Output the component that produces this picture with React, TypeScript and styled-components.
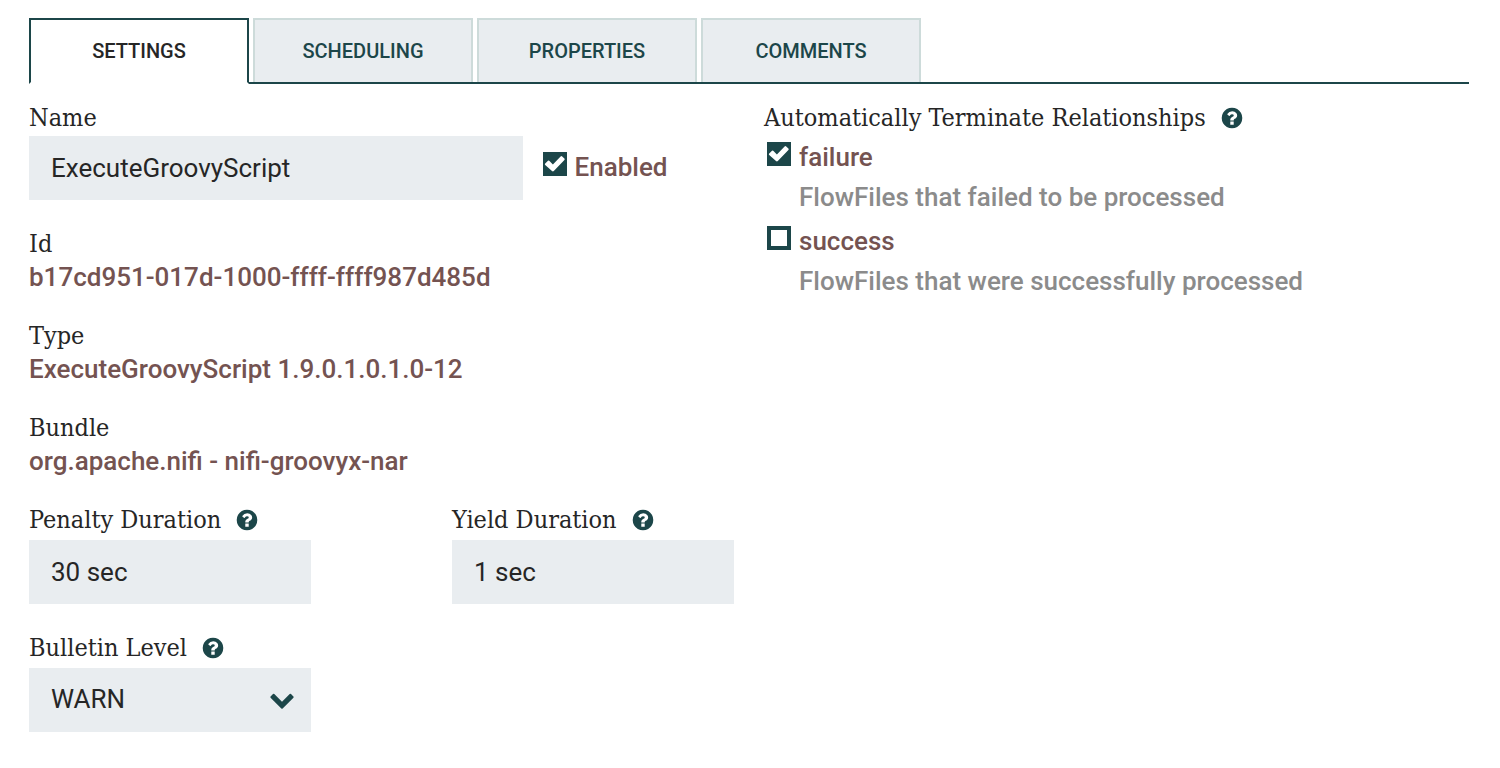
import React, { useId, useState } from 'react';
import styled, { createGlobalStyle, ThemeProvider } from 'styled-components';

const theme = {
  teal: '#1c4649',
  field: '#e9edf0',
  tabBorder: '#cddbda',
  ink: '#262626',
  value: '#745351',
  muted: '#8b8b8b',
  sans: "Roboto, 'Liberation Sans', sans-serif",
  slab: "'Roboto Slab', 'DejaVu Serif Condensed', 'DejaVu Serif', serif",
};

const GlobalStyle = createGlobalStyle`
  * { box-sizing: border-box; }
  body {
    margin: 0;
    background: #fff;
    color: ${theme.ink};
    font-family: ${theme.sans};
    font-size: 26px;
    line-height: 32px;
  }
  button, input, select { font: inherit; color: inherit; }
`;

const Page = styled.main`
  padding: 18px 31px 36px 29px;
`;

const TabList = styled.div`
  display: flex;
  gap: 4px;
  border-bottom: 2px solid ${(p) => p.theme.teal};
`;

const Tab = styled.button<{ $active: boolean }>`
  width: 220px;
  height: ${(p) => (p.$active ? 66 : 64)}px;
  margin: 0 0 ${(p) => (p.$active ? -2 : 0)}px;
  padding: 0;
  border: 2px solid ${(p) => (p.$active ? p.theme.teal : p.theme.tabBorder)};
  border-bottom: ${(p) => (p.$active ? '2px solid #fff' : '0')};
  background: ${(p) => (p.$active ? '#fff' : p.theme.field)};
  color: ${(p) => (p.$active ? p.theme.ink : p.theme.teal)};
  font-size: 20px;
  font-weight: 500;
  text-transform: uppercase;
  cursor: pointer;
`;

const Columns = styled.div`
  display: grid;
  grid-template-columns: 1fr 1fr;
  gap: 30px;
  padding-top: 18px;
`;

const Column = styled.section`
  display: flex;
  flex-direction: column;
  gap: 28px;
`;

const Field = styled.div<{ $gap?: number; $width?: string }>`
  display: flex;
  flex-direction: column;
  gap: ${(p) => p.$gap ?? 2}px;
  width: ${(p) => p.$width ?? 'auto'};
`;

const LabelRow = styled.div`
  display: flex;
  align-items: center;
  gap: 14px;
  font-family: ${(p) => p.theme.slab};
  font-size: 25px;
  white-space: nowrap;
`;

const Value = styled.div`
  color: ${(p) => p.theme.value};
  font-weight: 500;
  line-height: 30px;
`;

const NameRow = styled.div`
  display: flex;
  gap: 20px;
`;

const TextBox = styled.input<{ $width?: string }>`
  width: ${(p) => p.$width ?? '100%'};
  height: 64px;
  padding: 0 22px;
  border: 0;
  border-radius: 0;
  background: ${(p) => p.theme.field};
`;

const DurationRow = styled.div`
  display: flex;
  justify-content: space-between;
`;

const SelectWrap = styled.div`
  display: grid;
  align-items: center;
`;

const Select = styled.select`
  grid-area: 1 / 1;
  appearance: none;
  width: 100%;
  height: 64px;
  padding: 0 22px 2px;
  border: 0;
  border-radius: 0;
  background: ${(p) => p.theme.field};
`;

const Chevron = styled.svg`
  grid-area: 1 / 1;
  justify-self: end;
  width: 26px;
  height: 26px;
  margin: 0 16px 2px 0;
  fill: ${(p) => p.theme.teal};
  pointer-events: none;
`;

const HelpSvg = styled.svg`
  width: 24px;
  height: 24px;
  fill: ${(p) => p.theme.teal};
`;

const CheckLabel = styled.label`
  display: flex;
  align-items: flex-start;
  gap: 8px;
  color: ${(p) => p.theme.value};
  font-weight: 500;
`;

const CheckBoxWrap = styled.span`
  display: grid;
  margin-top: 1px;
`;

const CheckInput = styled.input`
  grid-area: 1 / 1;
  appearance: none;
  width: 24px;
  height: 24px;
  margin: 0;
  border: 4px solid ${(p) => p.theme.teal};
  background: #fff;

  &:checked { background: ${(p) => p.theme.teal}; }
`;

const CheckMark = styled.svg`
  grid-area: 1 / 1;
  width: 24px;
  height: 24px;
  fill: #fff;
  pointer-events: none;
`;

const EnabledSlot = styled.div`
  padding-top: 15px;
`;

const Relationships = styled.ul`
  display: flex;
  flex-direction: column;
  gap: 12px;
  margin: 0;
  padding: 7px 0 0 3px;
  list-style: none;
`;

const Description = styled.p`
  margin: 8px 0 0;
  padding-left: 32px;
  color: ${(p) => p.theme.muted};
  font-weight: 500;
`;

function HelpIcon() {
  return (
    <HelpSvg viewBox="0 0 1792 1792" role="img" aria-label="Help">
      <path d="M1024 1376v-192q0-14-9-23t-23-9h-192q-14 0-23 9t-9 23v192q0 14 9 23t23 9h192q14 0 23-9t9-23zm256-672q0-88-55.5-163t-138.5-116-170-41q-243 0-371 213-15 24 8 42l132 100q7 6 19 6 16 0 25-12 53-68 86-92 34-24 86-24 48 0 85.5 26t37.5 59q0 38-20 61t-68 45q-63 28-115.5 86.5t-52.5 125.5v36q0 14 9 23t23 9h192q14 0 23-9t9-23q0-19 21.5-49.5t54.5-49.5q32-18 49-28.5t46-35 44.5-48 28-60.5 12.5-81zm384 192q0 209-103 385.5t-279.5 279.5-385.5 103-385.5-103-279.5-279.5-103-385.5 103-385.5 279.5-279.5 385.5-103 385.5 103 279.5 279.5 103 385.5z" />
    </HelpSvg>
  );
}

function CheckBox({ label, initial }: { label: string; initial: boolean }) {
  const [checked, setChecked] = useState(initial);
  return (
    <CheckLabel>
      <CheckBoxWrap>
        <CheckInput type="checkbox" checked={checked} onChange={(e) => setChecked(e.target.checked)} />
        {checked && (
          <CheckMark viewBox="0 0 24 24" aria-hidden="true">
            <path d="M2.2 11.4 5 8.8q.8-.6 1.5.1l3.4 3.5 7.7-8q.8-.7 1.6 0l2.2 2.1q.7.8 0 1.6L10.8 19q-.9.8-1.8 0L2.2 13q-.8-.8 0-1.6z" />
          </CheckMark>
        )}
      </CheckBoxWrap>
      {label}
    </CheckLabel>
  );
}

function ReadOnlyField({ label, value }: { label: string; value: string }) {
  return (
    <Field>
      <LabelRow>{label}</LabelRow>
      <Value>{value}</Value>
    </Field>
  );
}

function DurationField({ label, value }: { label: string; value: string }) {
  const id = useId();
  return (
    <Field $gap={4} $width="40%">
      <LabelRow>
        <label htmlFor={id}>{label}</label>
        <HelpIcon />
      </LabelRow>
      <TextBox id={id} type="text" defaultValue={value} />
    </Field>
  );
}

const tabs = ['Settings', 'Scheduling', 'Properties', 'Comments'];

const relationships = [
  { name: 'failure', terminate: true, description: 'FlowFiles that failed to be processed' },
  { name: 'success', terminate: false, description: 'FlowFiles that were successfully processed' },
];

export default function App() {
  const [active, setActive] = useState('Settings');
  return (
    <ThemeProvider theme={theme}>
      <GlobalStyle />
      <Page>
        <TabList role="tablist">
          {tabs.map((tab) => (
            <Tab
              key={tab}
              type="button"
              role="tab"
              aria-selected={tab === active}
              $active={tab === active}
              onClick={() => setActive(tab)}
            >
              {tab}
            </Tab>
          ))}
        </TabList>
        <Columns>
          <Column>
            <Field>
              <LabelRow>
                <label htmlFor="name">Name</label>
              </LabelRow>
              <NameRow>
                <TextBox id="name" type="text" defaultValue="ExecuteGroovyScript" $width="70%" />
                <EnabledSlot>
                  <CheckBox label="Enabled" initial />
                </EnabledSlot>
              </NameRow>
            </Field>
            <ReadOnlyField label="Id" value="b17cd951-017d-1000-ffff-ffff987d485d" />
            <ReadOnlyField label="Type" value="ExecuteGroovyScript 1.9.0.1.0.1.0-12" />
            <ReadOnlyField label="Bundle" value="org.apache.nifi - nifi-groovyx-nar" />
            <DurationRow>
              <DurationField label="Penalty Duration" value="30 sec" />
              <DurationField label="Yield Duration" value="1 sec" />
            </DurationRow>
            <Field $gap={4} $width="40%">
              <LabelRow>
                <label htmlFor="bulletin">Bulletin Level</label>
                <HelpIcon />
              </LabelRow>
              <SelectWrap>
                <Select id="bulletin" defaultValue="WARN">
                  <option>DEBUG</option>
                  <option>INFO</option>
                  <option>WARN</option>
                  <option>ERROR</option>
                  <option>NONE</option>
                </Select>
                <Chevron viewBox="0 0 1792 1792" aria-hidden="true">
                  <path d="M1683 808l-742 741q-19 19-45 19t-45-19l-742-741q-19-19-19-45.5t19-45.5l166-165q19-19 45-19t45 19l531 531 531-531q19-19 45-19t45 19l166 165q19 19 19 45.5t-19 45.5z" />
                </Chevron>
              </SelectWrap>
            </Field>
          </Column>
          <section>
            <LabelRow>
              Automatically Terminate Relationships
              <HelpIcon />
            </LabelRow>
            <Relationships>
              {relationships.map((r) => (
                <li key={r.name}>
                  <CheckBox label={r.name} initial={r.terminate} />
                  <Description>{r.description}</Description>
                </li>
              ))}
            </Relationships>
          </section>
        </Columns>
      </Page>
    </ThemeProvider>
  );
}
